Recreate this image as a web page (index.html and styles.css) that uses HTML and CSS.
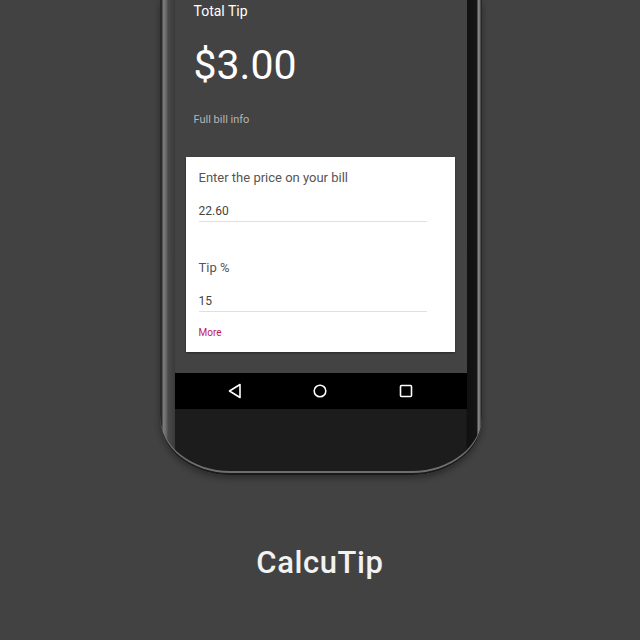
FILE: index.html
```html
<!DOCTYPE html>
<html>
<head>
<meta charset="utf-8">
<link rel="stylesheet" href="styles.css">
</head>
<body>
<div class="stage">
  <div class="phone">
    <div class="screen">
      <div class="summary">
        <div class="label">Total Tip</div>
        <div class="amount">$3.00</div>
        <div class="info">Full bill info</div>
      </div>
      <div class="card">
        <div class="field">
          <div class="field-label">Enter the price on your bill</div>
          <div class="field-value">22.60</div>
        </div>
        <div class="field second">
          <div class="field-label">Tip %</div>
          <div class="field-value">15</div>
        </div>
        <div class="more">More</div>
      </div>
      <div class="navbar">
        <svg class="nav-icon" width="16" height="16" viewBox="0 0 16 16"><path d="M13 1.5 L2.5 8 L13 14.5 Z" fill="none" stroke="#fff" stroke-width="1.6" stroke-linejoin="round"/></svg>
        <svg class="nav-icon" width="16" height="16" viewBox="0 0 16 16"><circle cx="8" cy="8" r="5.8" fill="none" stroke="#fff" stroke-width="1.6"/></svg>
        <svg class="nav-icon" width="16" height="16" viewBox="0 0 16 16"><rect x="2.5" y="2.5" width="11" height="11" rx="1" fill="none" stroke="#fff" stroke-width="1.6"/></svg>
      </div>
    </div>
    <div class="chin"></div>
  </div>
  <div class="title">CalcuTip</div>
</div>
</body>
</html>
```
FILE: styles.css
```css
html, body {
  margin: 0;
  padding: 0;
  background: #424242;
  font-family: Roboto, "Noto Sans", "Liberation Sans", sans-serif;
}
.stage {
  width: 640px;
  height: 640px;
  display: flex;
  flex-direction: column;
  align-items: center;
}
.phone {
  width: 292px;
  height: 475px;
  margin-left: 1px;
  padding: 0 15px;
  display: flex;
  flex-direction: column;
  background: linear-gradient(to right,
    #2a2a2a 0, #2a2a2a 2px,
    #7d7d7d 3px, #6a6a6a 6px,
    #4a4a4a 8px, #3a3a3a 15px,
    #1c1c1c 15px, #1c1c1c 306px,
    #111 307px, #151515 317px,
    #8a8a8a 318px, #6f6f6f 320px, #2a2a2a 321px);
  border-radius: 0 0 70px 70px / 0 0 56px 56px;
  box-shadow: inset 0 -2px 0 #1a1a1a, inset 0 -4px 0 #6e6e6e, 0 3px 6px rgba(0,0,0,0.35);
  overflow: hidden;
}
.screen {
  height: 409px;
  background: #434343;
  display: flex;
  flex-direction: column;
}
.summary {
  padding-left: 19px;
  color: #fff;
}
.label {
  font-size: 14px;
  line-height: 16px;
  margin-top: 3px;
  font-weight: 400;
}
.amount {
  font-size: 41px;
  line-height: 48px;
  margin-top: 22px;
}
.info {
  font-size: 11px;
  line-height: 14px;
  color: #b5b5b5;
  margin-top: 24px;
}
.card {
  margin: 30px 12px 0 11px;
  height: 195px;
  box-sizing: border-box;
  background: #fff;
  padding: 13px 28px 0 13px;
  display: flex;
  flex-direction: column;
  box-shadow: 0 1px 2px rgba(0,0,0,0.4);
}
.field-label {
  font-size: 13px;
  line-height: 16px;
  color: #555;
}
.field-value {
  font-size: 12px;
  line-height: 15px;
  color: #444;
  margin-top: 18px;
  padding-bottom: 2px;
  border-bottom: 1.5px solid #e0e0e0;
}
.second {
  margin-top: 38px;
}
.more {
  font-size: 10px;
  line-height: 12px;
  color: #c2185b;
  margin-top: 15px;
}
.navbar {
  margin-top: auto;
  height: 36px;
  background: #000;
  display: flex;
  align-items: center;
  justify-content: space-between;
  padding: 0 53px 0 52px;
}
.nav-icon {
  display: block;
}
.chin {
  flex: 1;
}
.title {
  margin-top: 70px;
  font-size: 31px;
  letter-spacing: 0.6px;
  font-weight: 500;
  color: #f2f2f2;
  line-height: 36px;
}
```
